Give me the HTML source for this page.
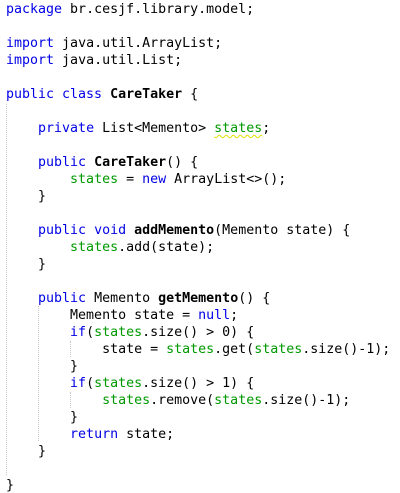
<!DOCTYPE html>
<html><head><style>
html,body{margin:0;padding:0;background:#fff;width:400px;height:493px;overflow:hidden;position:relative}
pre{margin:0;position:absolute;left:6px;top:1px;font-family:"DejaVu Sans Mono","Liberation Mono",monospace;font-size:13.3px;line-height:17px;color:#000}
.k{color:#0000e6}.g{color:#009900}b{font-weight:bold}
.u{text-decoration:underline wavy #e0e000;text-decoration-thickness:1px;text-underline-offset:2px}
.v{position:absolute;width:0;border-left:1px dotted #c8c8c8}
</style></head><body>
<div class="v" style="left:6px;top:104px;height:371px"></div>
<div class="v" style="left:38px;top:306px;height:135px"></div>
<div class="v" style="left:70px;top:341px;height:16px"></div>
<div class="v" style="left:70px;top:392px;height:16px"></div>
<pre><span class="k">package</span> br.cesjf.library.model;

<span class="k">import</span> java.util.ArrayList;
<span class="k">import</span> java.util.List;

<span class="k">public class</span> <b>CareTaker</b> {

    <span class="k">private</span> List&lt;Memento&gt; <span class="g u">states</span>;

    <span class="k">public</span> <b>CareTaker</b>() {
        <span class="g">states</span> = <span class="k">new</span> ArrayList&lt;&gt;();
    }

    <span class="k">public void</span> <b>addMemento</b>(Memento state) {
        <span class="g">states</span>.add(state);
    }

    <span class="k">public</span> Memento <b>getMemento</b>() {
        Memento state = <span class="k">null</span>;
        <span class="k">if</span>(<span class="g">states</span>.size() &gt; 0) {
            state = <span class="g">states</span>.get(<span class="g">states</span>.size()-1);
        }
        <span class="k">if</span>(<span class="g">states</span>.size() &gt; 1) {
            <span class="g">states</span>.remove(<span class="g">states</span>.size()-1);
        }
        <span class="k">return</span> state;
    }

}</pre>
</body></html>
